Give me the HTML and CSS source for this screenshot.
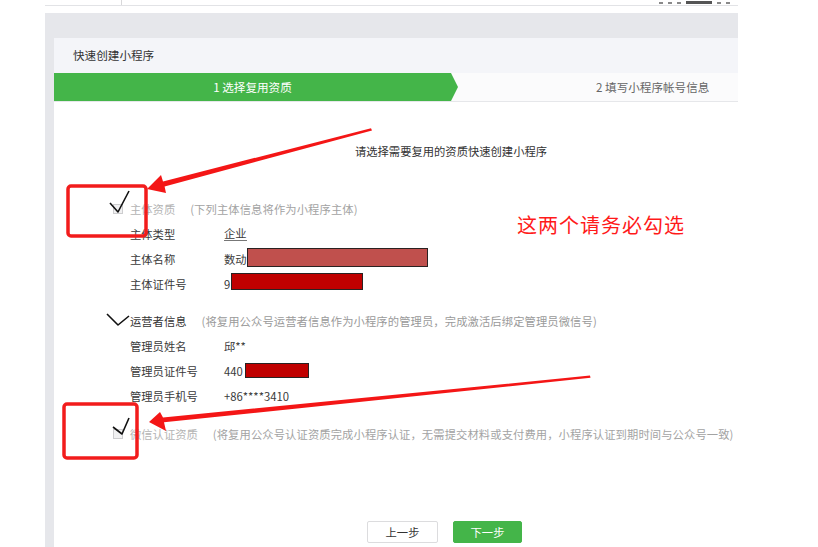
FILE: index.html
```html
<!DOCTYPE html>
<html lang="zh-CN">
<head>
<meta charset="utf-8">
<title>快速创建小程序</title>
<link rel="stylesheet" href="styles.css">
</head>
<body>
<div class="topbar">
  <div class="topbar-inner">
    <span class="topbar-divider"></span>
    <span class="topbar-marks">
      <i class="mark mark-s"></i><i class="mark mark-s"></i><i class="mark mark-s"></i><i class="mark mark-l"></i><i class="mark mark-s"></i><i class="mark mark-s"></i>
    </span>
  </div>
</div>
<div class="shell">
  <div class="card">
    <div class="card-head">快速创建小程序</div>
    <div class="steps">
      <div class="step step-active">1 选择复用资质</div>
      <div class="step step-next">2 填写小程序帐号信息</div>
    </div>
    <div class="content">
      <p class="intro">请选择需要复用的资质快速创建小程序</p>

      <section class="group group-first">
        <div class="group-title is-disabled">
          <span class="checkbox"></span>
          <span class="title">主体资质</span>
          <span class="hint">(下列主体信息将作为小程序主体)</span>
        </div>
        <div class="row"><span class="label">主体类型</span><span class="value"><span class="underlined">企业</span></span></div>
        <div class="row"><span class="label">主体名称</span><span class="value">数动<span class="redact redact-a"></span></span></div>
        <div class="row"><span class="label">主体证件号</span><span class="value">9<span class="redact redact-b"></span></span></div>
      </section>

      <section class="group">
        <div class="group-title">
          <span class="checkbox checkbox-blank"></span>
          <span class="title">运营者信息</span>
          <span class="hint">(将复用公众号运营者信息作为小程序的管理员，完成激活后绑定管理员微信号)</span>
        </div>
        <div class="row"><span class="label">管理员姓名</span><span class="value">邱**</span></div>
        <div class="row"><span class="label">管理员证件号</span><span class="value">440<span class="redact redact-c"></span></span></div>
        <div class="row"><span class="label">管理员手机号</span><span class="value">+86****3410</span></div>
      </section>

      <section class="group group-last">
        <div class="group-title is-disabled">
          <span class="checkbox"></span>
          <span class="title">微信认证资质</span>
          <span class="hint">(将复用公众号认证资质完成小程序认证，无需提交材料或支付费用，小程序认证到期时间与公众号一致)</span>
        </div>
      </section>

      <div class="actions">
        <button class="btn">上一步</button>
        <button class="btn btn-primary">下一步</button>
      </div>
    </div>
  </div>
</div>

<svg class="annotations" width="818" height="547" viewBox="0 0 818 547" aria-hidden="true">
  <rect x="68" y="186" width="78" height="50" rx="3" fill="none" stroke="#f21c1c" stroke-width="3.5"/>
  <rect x="64" y="404" width="73" height="54" rx="3" fill="none" stroke="#f21c1c" stroke-width="3.5"/>
  <polygon points="371,128.2 372,130.4 164.6,186.6 166,193 147,189 161,175 163,181.4" fill="#f41616"/>
  <polygon points="590,375.6 590.5,377.8 164,422.3 166,431 149,422 160,412 163,417.4" fill="#f41616"/>
  <polyline points="110,203 118,212 129,191" fill="none" stroke="#111" stroke-width="1.6" stroke-linejoin="round"/>
  <polyline points="107,314 118,325 129,316" fill="none" stroke="#111" stroke-width="1.6" stroke-linejoin="round"/>
  <polyline points="113,427 122,434 129,418" fill="none" stroke="#111" stroke-width="1.6" stroke-linejoin="round"/>
</svg>
<div class="note">这两个请务必勾选</div>
</body>
</html>
```
FILE: styles.css
```css
* { box-sizing: border-box; margin: 0; padding: 0; }

html, body {
  width: 818px;
  height: 547px;
  overflow: hidden;
  background: #fff;
}

body {
  position: relative;
  font-family: "Noto Sans CJK SC", "Noto Sans", sans-serif;
  font-size: 11.3px;
  color: #353535;
}

/* top strip */
.topbar { height: 13px; padding-left: 45px; }
.topbar-inner {
  display: flex;
  width: 693px;
  height: 6px;
  border-bottom: 1px solid #e2e3e6;
}
.topbar-divider { width: 77px; border-right: 1px solid #d8d8da; }
.topbar-marks {
  display: flex;
  align-items: flex-end;
  gap: 5px;
  margin-left: auto;
  margin-right: 8px;
  padding-bottom: 1px;
}
.mark { display: block; height: 2px; background: #8a8a8a; }
.mark-s { width: 4px; }
.mark-l { width: 26px; height: 3px; background: #555; }

/* grey shell and card */
.shell {
  margin-left: 45px;
  width: 693px;
  height: 534px;
  padding: 25px 0 0 9px;
  background: #e6e7eb;
  overflow: hidden;
}
.card {
  width: 794px;
  height: 100%;
  background: #fff;
}
.card-head {
  height: 35px;
  padding-left: 19px;
  line-height: 35px;
  font-size: 11.6px;
  color: #333;
  background: #f4f5f9;
}

/* steps */
.steps {
  display: flex;
  height: 29px;
  border-bottom: 1px solid #e6e7ea;
  background: #fbfbfc;
}
.step { line-height: 28px; font-size: 11.6px; }
.step-active {
  width: 404px;
  padding-right: 7px;
  text-align: center;
  color: #fff;
  background: #44b549;
  clip-path: polygon(0 0, 397px 0, 404px 50%, 397px 100%, 0 100%);
}
.step-next { padding-left: 138px; color: #666; }

/* content */
.content { padding: 37px 0 0 59px; }
.intro {
  margin-left: -59px;
  line-height: 25px;
  text-align: center;
  color: #333;
}

.group { margin-top: 12px; }
.group-first { margin-top: 32px; }
.group-last { margin-top: 13px; }

.group-title {
  display: flex;
  align-items: center;
  height: 25px;
}
.checkbox {
  width: 10px;
  height: 10px;
  margin-right: 7px;
  border: 1px solid #cdcdcf;
  background: #f1f1f2;
}
.checkbox-blank { border-color: transparent; background: transparent; }
.title { color: #333; }
.hint { margin-left: 15px; color: #9a9a9a; letter-spacing: 0.1px; }
.is-disabled .title { color: #b4b4b4; }
.is-disabled .hint { color: #a3a3a3; }

.row {
  display: flex;
  align-items: center;
  height: 25px;
  padding-left: 17px;
}
.label { width: 94px; color: #3a3a3a; }
.value { display: flex; align-items: center; color: #3a3a3a; }
.underlined { border-bottom: 1px solid #777; line-height: 14px; }

.redact {
  display: inline-block;
  border: 1px solid #2a2222;
}
.redact-a { width: 181px; height: 19px; margin-top: -3px; background: #c0504d; }
.redact-b { width: 132px; height: 17px; margin-left: 1px; margin-top: -5px; background: #c00000; }
.redact-c { width: 64px; height: 15px; margin-left: 2px; background: #c00000; }

/* buttons */
.actions {
  display: flex;
  gap: 15px;
  margin-top: 75px;
  padding-left: 254px;
}
.btn {
  width: 71px;
  height: 22px;
  font-family: inherit;
  font-size: 11.3px;
  line-height: 20px;
  color: #333;
  background: #fff;
  border: 1px solid #dcdcde;
  border-radius: 2px;
}
.btn-primary {
  width: 69px;
  color: #fff;
  background: #44b549;
  border-color: #44b549;
}

/* annotations over the page */
.annotations {
  position: absolute;
  left: 0;
  top: 0;
  pointer-events: none;
}
.note {
  position: absolute;
  left: 517px;
  top: 212px;
  font-size: 20px;
  line-height: 26px;
  letter-spacing: 1px;
  color: #ff1a1a;
}
```
